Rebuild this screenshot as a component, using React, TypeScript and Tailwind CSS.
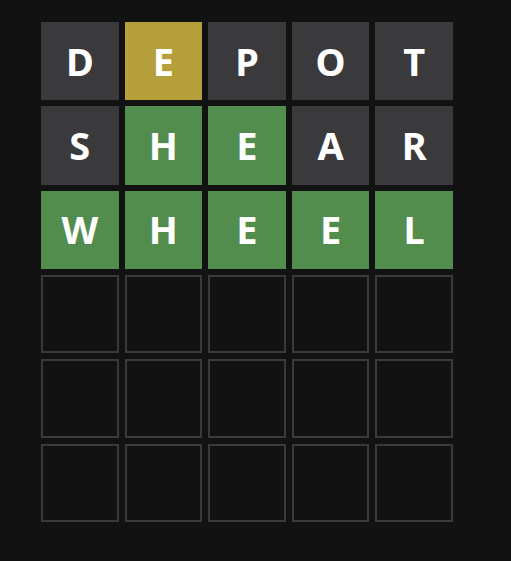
import React from 'react'

const rows = [
  [['D', 'dark'], ['E', 'yellow'], ['P', 'dark'], ['O', 'dark'], ['T', 'dark']],
  [['S', 'dark'], ['H', 'green'], ['E', 'green'], ['A', 'dark'], ['R', 'dark']],
  [['W', 'green'], ['H', 'green'], ['E', 'green'], ['E', 'green'], ['L', 'green']],
]

const tileColor = {
  dark: 'bg-[#3a3a3c]',
  yellow: 'bg-[#b59f3b]',
  green: 'bg-[#538d4e]',
}

const App = () => {
  const empty = Array.from({ length: 15 })

  return (
    <div className="min-h-screen w-full bg-[#121212] pt-[22px] pl-[41px]">
      <div className="grid h-[500px] w-[412px] grid-cols-5 grid-rows-6 gap-[6px]">
        {rows.flat().map(([letter, state], i) => (
          <div
            key={i}
            className={`flex items-center justify-center text-[38px] font-bold text-white ${tileColor[state]}`}
            style={{ fontFamily: '"Noto Sans", "DejaVu Sans", sans-serif' }}
          >
            {letter}
          </div>
        ))}
        {empty.map((_, i) => (
          <div key={'e' + i} className="border-2 border-[#3a3a3c] bg-[#121212]" />
        ))}
      </div>
    </div>
  )
}

export default App
